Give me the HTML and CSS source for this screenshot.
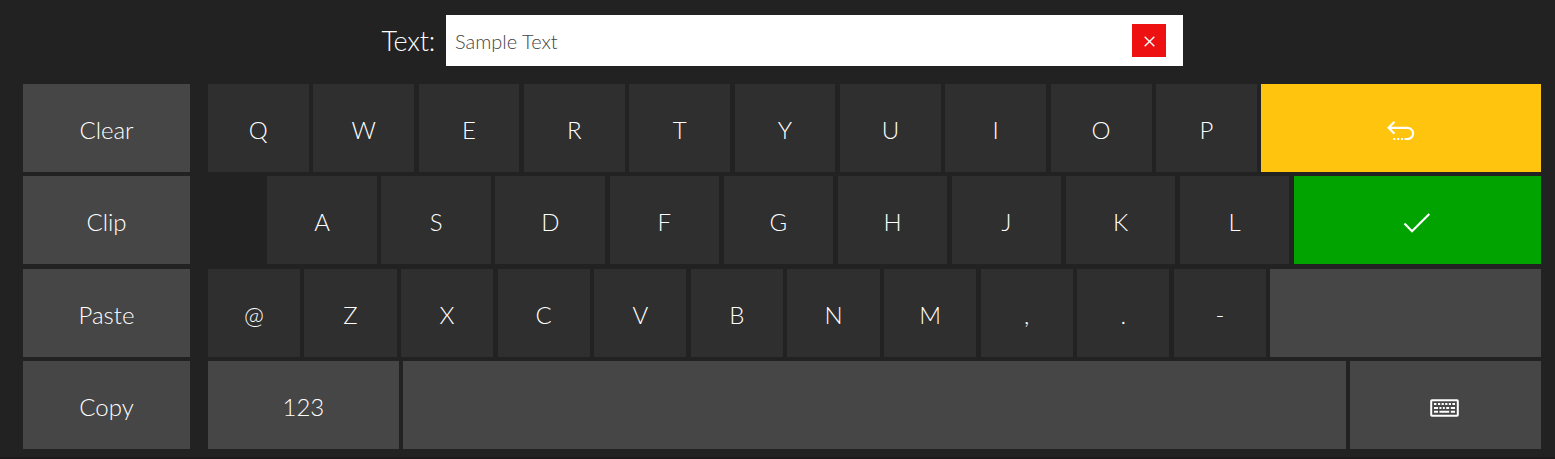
FILE: index.html
```html
<!DOCTYPE html>
<html lang="en">

<head>
    <meta charset="utf-8">
    <title>Keyboard</title>
    <link rel="stylesheet" href="styles.css">
</head>

<body>
    <div class="header">
        <label class="label" for="text">Text:</label>
        <div class="field">
            <div class="value" id="text">Sample Text</div>
            <div class="close">
                <svg width="11" height="11" viewBox="0 0 11 11">
                    <path d="M0.7 0.7 10.3 10.3M10.3 0.7 0.7 10.3" />
                </svg>
            </div>
        </div>
    </div>

    <div class="content">
        <div class="commands">
            <div class="key dark-gray">Clear</div>
            <div class="key dark-gray">Clip</div>
            <div class="key dark-gray">Paste</div>
            <div class="key dark-gray">Copy</div>
        </div>

        <div class="keyboard">
            <div class="row row-top">
                <div class="key">Q</div>
                <div class="key">W</div>
                <div class="key">E</div>
                <div class="key">R</div>
                <div class="key">T</div>
                <div class="key">Y</div>
                <div class="key">U</div>
                <div class="key">I</div>
                <div class="key">O</div>
                <div class="key">P</div>
                <div class="key back">
                    <svg width="28" height="20" viewBox="0 0 28 20">
                        <path d="M7.5 0.8 1.5 6.8 7.5 12.8M2 6.8H20.5A5.6 5.6 0 0 1 20.5 18H17.5" />
                        <path d="M6.3 18h2M10.2 18h2M14 18h2" />
                    </svg>
                </div>
            </div>
            <div class="row row-middle">
                <div class="spacer"></div>
                <div class="key">A</div>
                <div class="key">S</div>
                <div class="key">D</div>
                <div class="key">F</div>
                <div class="key">G</div>
                <div class="key">H</div>
                <div class="key">J</div>
                <div class="key">K</div>
                <div class="key">L</div>
                <div class="key enter">
                    <svg width="28" height="20" viewBox="0 0 28 20">
                        <path d="M1.5 10.6 9 18.2 26.3 1" />
                    </svg>
                </div>
            </div>
            <div class="row row-bottom">
                <div class="key">@</div>
                <div class="key">Z</div>
                <div class="key">X</div>
                <div class="key">C</div>
                <div class="key">V</div>
                <div class="key">B</div>
                <div class="key">N</div>
                <div class="key">M</div>
                <div class="key">,</div>
                <div class="key">.</div>
                <div class="key">-</div>
                <div class="key dark-gray"></div>
            </div>
            <div class="row row-space">
                <div class="key dark-gray">123</div>
                <div class="key dark-gray"></div>
                <div class="key dark-gray board">
                    <svg width="29" height="18" viewBox="0 0 29 18">
                        <rect x="1.2" y="1.2" width="26.6" height="15.6" rx="0.8" />
                        <path d="M4 5h2.4M8 5h2.2M11.6 5h2.2M15.2 5h2.2M18.8 5h2.2M22.4 5h2.6M4 9h4M9.4 9h2M12.8 9h2M16.2 9h3M20.8 9h4.2M4 12.8h4M9.4 12.8h9.8M20.8 12.8h4.2" />
                    </svg>
                </div>
            </div>
        </div>
    </div>
</body>

</html>
```
FILE: styles.css
```css
* {
    box-sizing: border-box;
}

body {
    margin: 0;
    padding: 15px 14px 0 23px;
    height: 459px;
    background: #222;
    border-bottom: 2px solid #1e1b1c;
    color: #fff;
    font-family: Lato, sans-serif;
    font-weight: 300;
    overflow: hidden;
}

.header {
    display: flex;
    align-items: center;
    height: 51px;
    margin-bottom: 18px;
}

.label {
    width: 423px;
    padding-right: 11px;
    text-align: right;
    font-size: 27px;
    letter-spacing: -0.2px;
}

.field {
    display: flex;
    align-items: center;
    justify-content: space-between;
    width: 737px;
    height: 51px;
    padding: 0 17px 0 9px;
    background: #fff;
    color: #444;
}

.value {
    font-size: 20px;
    padding-top: 1px;
}

.close {
    display: flex;
    align-items: center;
    justify-content: center;
    width: 34px;
    height: 33px;
    background: #e11;
}

.content {
    display: flex;
    gap: 17.8px;
    height: 365px;
}

.commands {
    display: grid;
    grid-template-rows: repeat(4, 1fr);
    gap: 4.3px;
    width: 167px;
}

.keyboard {
    display: grid;
    grid-template-rows: repeat(4, 1fr);
    gap: 4.3px;
    flex: 1;
}

.row {
    display: grid;
    gap: 4.45px;
}

.row-top {
    grid-template-columns: repeat(10, 1fr) 279.7px;
}

.row-middle {
    grid-template-columns: 55.17px repeat(9, 1fr) 247.13px;
}

.row-bottom {
    grid-template-columns: repeat(11, 1fr) 270.6px;
}

.row-space {
    grid-template-columns: 191.2px 1fr 191px;
}

.key {
    display: flex;
    align-items: center;
    justify-content: center;
    background: #2f2f2f;
    font-size: 24px;
    padding-top: 3px;
}

.dark-gray {
    background: #464646;
}

.back {
    background: #ffc40d;
    padding-top: 5px;
}

.enter {
    background: #00a300;
    padding-top: 5px;
}

.board {
    padding: 6px 2px 0 0;
}

svg {
    fill: none;
    stroke: #fff;
    stroke-width: 2.2;
}

.board svg {
    stroke-width: 2;
}

.close svg {
    stroke-width: 1.4;
    margin-top: 1px;
}
```
